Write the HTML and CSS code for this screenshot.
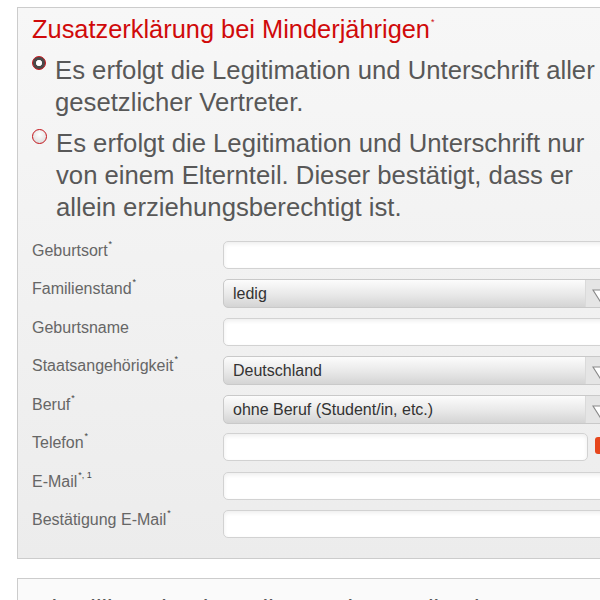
FILE: index.html
```html
<!DOCTYPE html>
<html lang="de">
<head>
<meta charset="utf-8">
<link rel="stylesheet" href="styles.css">
</head>
<body>
<div class="page">
  <section class="panel">
    <h2 class="title">Zusatzerklärung bei Minderjährigen<sup>*</sup></h2>
    <div class="choice checked">
      <span class="radio"></span>
      <p class="choice-text">Es erfolgt die Legitimation und Unterschrift aller gesetzlicher Vertreter.</p>
    </div>
    <div class="choice">
      <span class="radio"></span>
      <p class="choice-text">Es erfolgt die Legitimation und Unterschrift nur von einem Elternteil. Dieser bestätigt, dass er allein erziehungsberechtigt ist.</p>
    </div>
    <div class="form">
      <div class="row"><label class="lbl">Geburtsort<sup>*</sup></label><div class="input"></div></div>
      <div class="row"><label class="lbl">Familienstand<sup>*</sup></label><div class="select"><span class="val">ledig</span><span class="arrow"><svg width="16" height="13" viewBox="0 0 16 13"><polygon points="1,1 15,1 8,12" fill="#fff" stroke="#8a8a8a" stroke-width="1.2"/></svg></span></div></div>
      <div class="row"><label class="lbl">Geburtsname</label><div class="input"></div></div>
      <div class="row"><label class="lbl">Staatsangehörigkeit<sup>*</sup></label><div class="select"><span class="val">Deutschland</span><span class="arrow"><svg width="16" height="13" viewBox="0 0 16 13"><polygon points="1,1 15,1 8,12" fill="#fff" stroke="#8a8a8a" stroke-width="1.2"/></svg></span></div></div>
      <div class="row"><label class="lbl">Beruf<sup>*</sup></label><div class="select"><span class="val">ohne Beruf (Student/in, etc.)</span><span class="arrow"><svg width="16" height="13" viewBox="0 0 16 13"><polygon points="1,1 15,1 8,12" fill="#fff" stroke="#8a8a8a" stroke-width="1.2"/></svg></span></div></div>
      <div class="row"><label class="lbl">Telefon<sup>*</sup></label><div class="input short"></div><span class="badge"></span></div>
      <div class="row"><label class="lbl">E-Mail<sup>*, 1</sup></label><div class="input"></div></div>
      <div class="row"><label class="lbl">Bestätigung E-Mail<sup>*</sup></label><div class="input"></div></div>
    </div>
  </section>
  <section class="panel2">
    <p class="note">Ich willige ein, dass die Sparkasse die oben genannten Daten verarbeitet.</p>
  </section>
</div>
</body>
</html>
```

FILE: styles.css
```css
html, body {
  margin: 0;
  padding: 0;
  overflow: hidden;
  background: #fff;
  font-family: "Liberation Sans", Arial, sans-serif;
}

.page {
  width: 700px;
  padding: 7px 0 0 17px;
}

.panel {
  border: 1px solid #cccccc;
  border-right: none;
  background: linear-gradient(#f7f7f7, #ececec);
  padding: 6px 0 20px 14px;
}

.title {
  margin: 0;
  font-size: 25.4px;
  line-height: 30px;
  font-weight: normal;
  color: #d00a0a;
}

.title sup {
  font-size: 9px;
  line-height: 1;
  vertical-align: top;
  position: relative;
  top: 4px;
  margin-left: 1px;
}

.choice {
  display: flex;
  align-items: flex-start;
  margin-top: 9px;
}

.checked {
  margin-top: 10px;
}

.radio {
  flex: none;
  width: 13px;
  height: 13px;
  border: 1px solid #c4141b;
  border-radius: 50%;
  margin-top: 2px;
  margin-right: 9px;
  background: radial-gradient(circle at 50% 35%, #ffffff, #d6d6d6);
}

.checked .radio {
  margin-top: 2px;
  border: 1.5px solid #c4141b;
  width: 12px;
  height: 12px;
  background: radial-gradient(circle, #ffffff 0 2.5px, #cfcfcf 3px, #4a4a4a 3.5px);
}

.choice-text {
  margin: 0;
  width: 552px;
  font-size: 25.7px;
  line-height: 32px;
  color: #585858;
}

.form {
  margin-top: 18px;
  display: flex;
  flex-direction: column;
  gap: 10.43px;
}

.row {
  display: flex;
  align-items: flex-start;
  height: 28px;
}

.lbl {
  flex: none;
  width: 191px;
  font-size: 16px;
  line-height: 20px;
  color: #666;
}

.lbl sup {
  font-size: 9px;
  line-height: 1;
  vertical-align: top;
  position: relative;
  top: -1px;
  color: #444;
  margin-left: 1px;
}

.input {
  box-sizing: border-box;
  width: 420px;
  height: 28px;
  background: #fff;
  border: 1px solid #d2d2d2;
  border-radius: 5px;
  box-shadow: inset 0 2px 4px rgba(0, 0, 0, 0.07);
}

.input.short {
  width: 365px;
}

.badge {
  margin-left: 7px;
  margin-top: 4px;
  width: 14px;
  height: 17px;
  border-radius: 3px;
  background: #e6461c;
}

.select {
  box-sizing: border-box;
  width: 420px;
  height: 29px;
  display: flex;
  border: 1px solid #c9c9c9;
  border-radius: 5px;
  background: linear-gradient(#fcfcfc, #e8e8e8 55%, #d4d4d4);
  overflow: hidden;
}

.val {
  flex: none;
  width: 352px;
  padding-left: 9px;
  font-size: 16px;
  line-height: 27px;
  color: #333;
}

.arrow {
  flex: none;
  width: 40px;
  background: #e5e5e5;
  border-left: 1px solid #dadada;
  padding-left: 6px;
  padding-top: 9px;
  box-sizing: border-box;
}

.arrow svg {
  display: block;
}

.panel2 {
  margin-top: 19px;
  border: 1px solid #cccccc;
  border-right: none;
  background: #fafafa;
  padding: 14px 0 10px 14px;
}

.note {
  margin: 0;
  font-size: 25px;
  line-height: 32px;
  color: #585858;
  white-space: nowrap;
}
```
